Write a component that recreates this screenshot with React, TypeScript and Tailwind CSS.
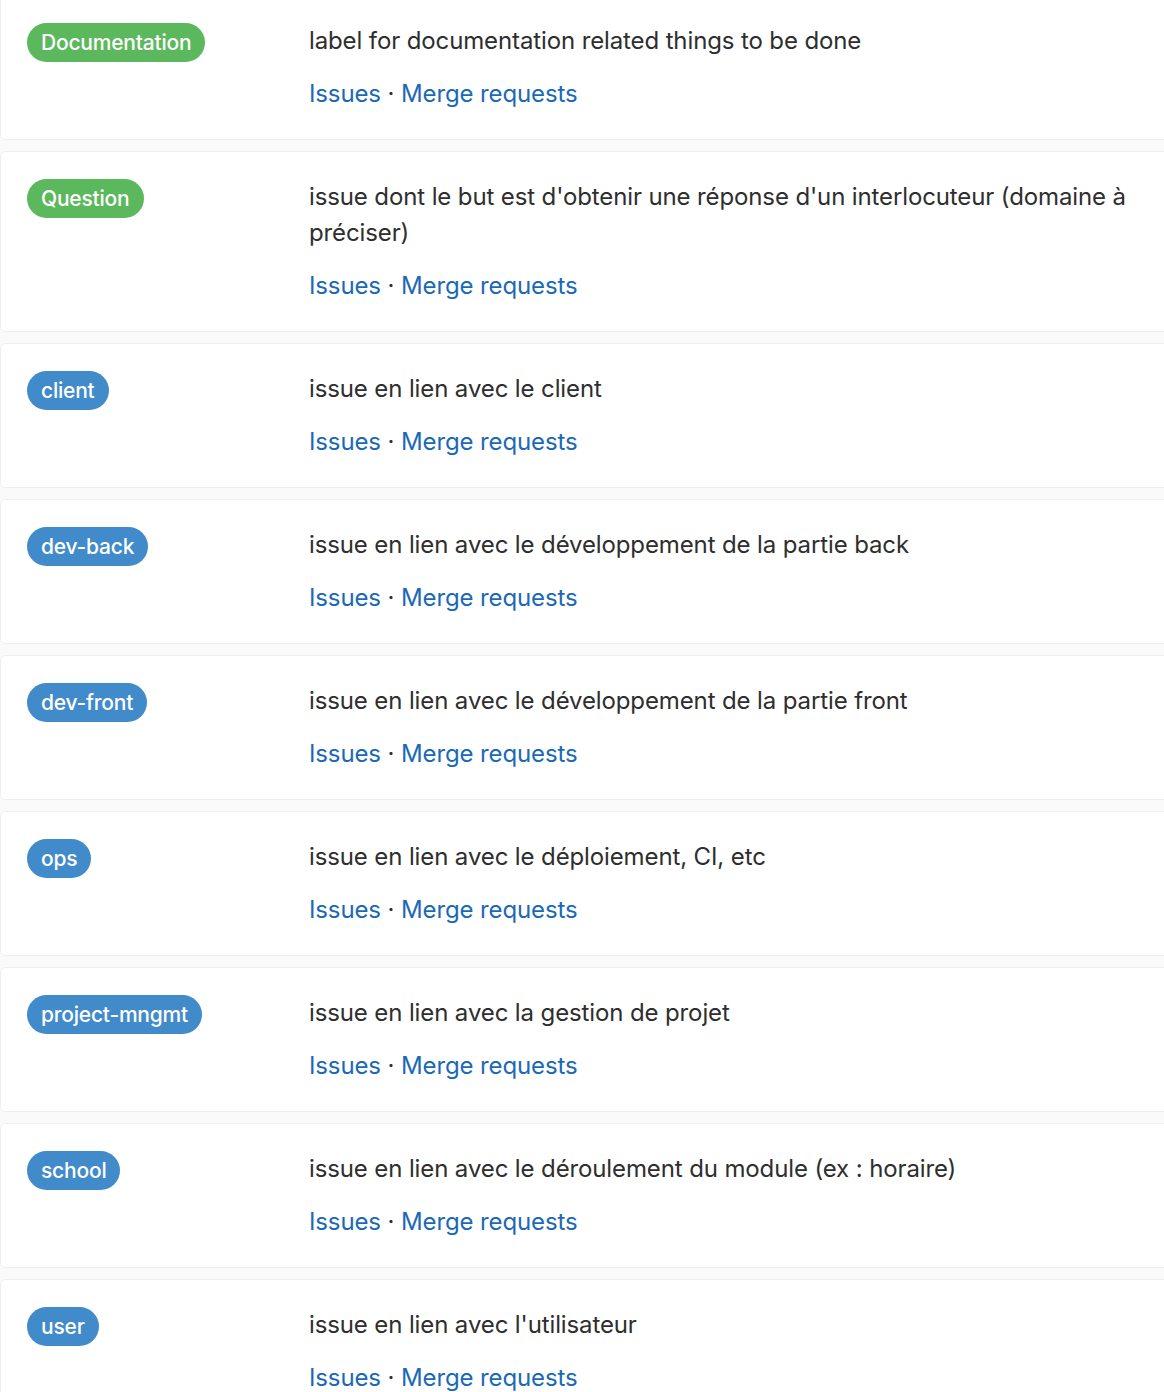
import React from "react";

type Label = { name: string; color: string; desc: string };

const labels: Label[] = [
  { name: "Documentation", color: "bg-[#5cb85c]", desc: "label for documentation related things to be done" },
  { name: "Question", color: "bg-[#5cb85c]", desc: "issue dont le but est d'obtenir une réponse d'un interlocuteur (domaine à préciser)" },
  { name: "client", color: "bg-[#428bca]", desc: "issue en lien avec le client" },
  { name: "dev-back", color: "bg-[#428bca]", desc: "issue en lien avec le développement de la partie back" },
  { name: "dev-front", color: "bg-[#428bca]", desc: "issue en lien avec le développement de la partie front" },
  { name: "ops", color: "bg-[#428bca]", desc: "issue en lien avec le déploiement, CI, etc" },
  { name: "project-mngmt", color: "bg-[#428bca]", desc: "issue en lien avec la gestion de projet" },
  { name: "school", color: "bg-[#428bca]", desc: "issue en lien avec le déroulement du module (ex : horaire)" },
  { name: "user", color: "bg-[#428bca]", desc: "issue en lien avec l'utilisateur" },
];

export default function App() {
  return (
    <div
      className="w-[1164px] h-[1392px] overflow-hidden bg-[#fafafa]"
      style={{ fontFamily: "Inter, 'Noto Sans', sans-serif" }}
    >
      <ul className="-mt-[5px] mr-[-20px] flex flex-col gap-[11px]">
        {labels.map((l) => (
          <li
            key={l.name}
            className="flex bg-white border border-[#efefef] rounded-[5px] pl-[26px] pt-[27px] pb-[27px] pr-[14px]"
          >
            <div className="w-[282px] shrink-0">
              <span
                className={`inline-flex items-center h-[39px] px-[14px] rounded-full text-white text-[21px] font-medium tracking-[-0.01em] ${l.color}`}
              >
                {l.name}
              </span>
            </div>
            <div className="flex-1 text-[24px] leading-[36px] text-[#2e2e2e] tracking-[-0.005em]">
              <div className="pr-[20px]">{l.desc}</div>
              <div className="mt-[17px]">
                <a className="text-[#1b69b6]">Issues</a>
                <span> · </span>
                <a className="text-[#1b69b6]">Merge requests</a>
              </div>
            </div>
          </li>
        ))}
      </ul>
    </div>
  );
}
